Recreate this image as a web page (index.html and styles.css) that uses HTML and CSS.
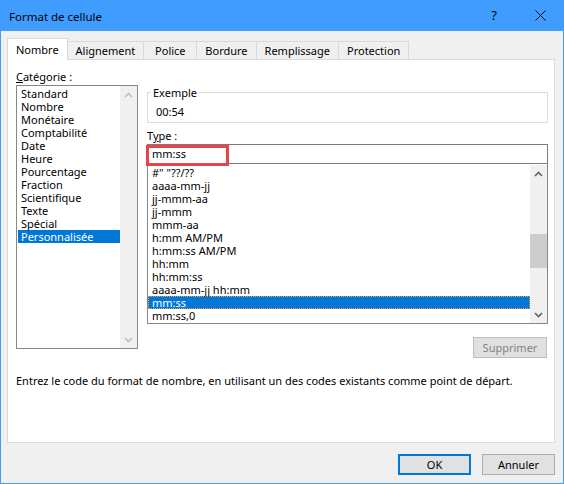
FILE: index.html
```html
<!DOCTYPE html>
<html lang="fr">
<head>
<meta charset="utf-8">
<title>Format de cellule</title>
<link rel="stylesheet" href="styles.css">
</head>
<body>
<div class="window">
  <div class="titlebar">
    <span class="title">Format de cellule</span>
    <span class="tb-btn help">?</span>
    <span class="tb-btn close">
      <svg width="11" height="11" viewBox="0 0 11 11"><path d="M0.5 0.5 L10.5 10.5 M10.5 0.5 L0.5 10.5" stroke="#000" stroke-width="1" fill="none"/></svg>
    </span>
  </div>
  <div class="content">
    <div class="tabs">
      <div class="tab active">Nombre</div>
      <div class="tab">Alignement</div>
      <div class="tab">Police</div>
      <div class="tab">Bordure</div>
      <div class="tab">Remplissage</div>
      <div class="tab">Protection</div>
    </div>
    <div class="panel">
      <div class="panel-top">
        <div class="left-col">
          <div class="label"><u>C</u>atégorie :</div>
          <div class="listbox cat-list">
            <div class="items">
              <div class="item">Standard</div>
              <div class="item">Nombre</div>
              <div class="item">Monétaire</div>
              <div class="item">Comptabilité</div>
              <div class="item">Date</div>
              <div class="item">Heure</div>
              <div class="item">Pourcentage</div>
              <div class="item">Fraction</div>
              <div class="item">Scientifique</div>
              <div class="item">Texte</div>
              <div class="item">Spécial</div>
              <div class="item selected">Personnalisée</div>
            </div>
            <div class="scrollbar disabled">
              <div class="sb-btn"><svg width="9" height="6" viewBox="0 0 9 6"><path d="M1 5 L4.5 1.5 L8 5" fill="none" stroke-width="1.6"/></svg></div>
              <div class="sb-track"></div>
              <div class="sb-btn"><svg width="9" height="6" viewBox="0 0 9 6"><path d="M1 1 L4.5 4.5 L8 1" fill="none" stroke-width="1.6"/></svg></div>
            </div>
          </div>
        </div>
        <div class="right-col">
          <fieldset class="group">
            <legend>Exemple</legend>
            <div class="sample">00:54</div>
          </fieldset>
          <div class="label type-label">T<u>y</u>pe :</div>
          <div class="type-wrap">
            <div class="textbox">mm:ss</div>
            <div class="highlight"></div>
          </div>
          <div class="listbox fmt-list">
            <div class="items">
              <div class="item first">#" "??/??</div>
              <div class="item">aaaa-mm-jj</div>
              <div class="item">jj-mmm-aa</div>
              <div class="item">jj-mmm</div>
              <div class="item">mmm-aa</div>
              <div class="item">h:mm AM/PM</div>
              <div class="item">h:mm:ss AM/PM</div>
              <div class="item">hh:mm</div>
              <div class="item">hh:mm:ss</div>
              <div class="item">aaaa-mm-jj hh:mm</div>
              <div class="item selected focused">mm:ss</div>
              <div class="item">mm:ss,0</div>
            </div>
            <div class="scrollbar">
              <div class="sb-btn"><svg width="9" height="6" viewBox="0 0 9 6"><path d="M1 5 L4.5 1.5 L8 5" fill="none" stroke-width="1.6"/></svg></div>
              <div class="sb-track"><div class="sb-thumb"></div></div>
              <div class="sb-btn"><svg width="9" height="6" viewBox="0 0 9 6"><path d="M1 1 L4.5 4.5 L8 1" fill="none" stroke-width="1.6"/></svg></div>
            </div>
          </div>
          <div class="btn disabled-btn delete">Supprimer</div>
        </div>
      </div>
      <p class="description">Entrez le code du format de nombre, en utilisant un des codes existants comme point de départ.</p>
    </div>
    <div class="actions">
      <div class="btn default">OK</div>
      <div class="btn">Annuler</div>
    </div>
  </div>
</div>
</body>
</html>
```
FILE: styles.css
```css
* { box-sizing: border-box; }
html, body { margin: 0; padding: 0; }
body {
  font-family: "Noto Sans", "Open Sans", sans-serif;
  font-size: 11px;
  line-height: 13px;
  color: #000;
  background: #f0f0f0;
}
.window {
  width: 564px;
  height: 484px;
  border: 1px solid #409cff;
  border-top: 0;
  background: #f0f0f0;
  display: flex;
  flex-direction: column;
}
.titlebar {
  height: 31px;
  background: #409cff;
  display: flex;
  align-items: center;
  padding-left: 8px;
  flex: none;
}
.title { flex: 1; font-size: 11.5px; padding-top: 1px; }
.tb-btn {
  width: 46px;
  height: 31px;
  display: flex;
  align-items: center;
  justify-content: center;
}
.help { font-size: 13px; }
.content { padding: 7px 8px 0 6px; }
.tabs {
  display: flex;
  align-items: flex-end;
  height: 21px;
  position: relative;
  z-index: 1;
}
.tab {
  height: 18px;
  padding: 0 8px;
  min-width: 54px;
  border: 1px solid #d9d9d9;
  border-bottom: 0;
  margin-left: -1px;
  background: #f0f0f0;
  display: flex;
  align-items: center;
  justify-content: center;
  white-space: nowrap;
}
.tab.active {
  margin-left: 0;
  height: 22px;
  margin-bottom: -1px;
  padding: 0 8px 1px;
  background: #fff;
  position: relative;
  z-index: 2;
}
.panel {
  height: 384px;
  background: #fff;
  border: 1px solid #d9d9d9;
  padding: 10px 6px 0 8px;
}
.panel-top { display: flex; gap: 9px; }
.left-col { width: 122px; }
.right-col { width: 401px; padding-top: 16px; display: flex; flex-direction: column; }
.label { height: 13px; white-space: nowrap; }
.listbox {
  border: 1px solid #828790;
  background: #fff;
  display: flex;
  overflow: hidden;
}
.cat-list { height: 264px; margin-top: 2px; }
.items { flex: 1; overflow: hidden; }
.cat-list .items { padding: 1px 0 0 1px; }
.item {
  height: 13px;
  line-height: 13px;
  padding-left: 3px;
  white-space: nowrap;
}
.item.selected { background: #0078d7; color: #fff; }
.item.focused { outline: 1px dotted #f0a13c; outline-offset: -1px; }
.scrollbar {
  width: 17px;
  flex: none;
  background: #f0f0f0;
  display: flex;
  flex-direction: column;
}
.sb-btn {
  height: 17px;
  flex: none;
  display: flex;
  align-items: center;
  justify-content: center;
}
.sb-btn svg { stroke: #606060; }
.scrollbar.disabled .sb-btn svg { stroke: #bfbfbf; }
.sb-track { flex: 1; }
.sb-thumb { margin: 52px 0 0 0; height: 34px; background: #cdcdcd; }
.group {
  margin: 0;
  border: 1px solid #dcdcdc;
  padding: 6px 8px 4px;
}
.group legend { padding: 0 2px; margin-left: -5px; line-height: 13px; }
.sample { height: 13px; }
.type-label { margin-top: 6px; }
.type-wrap { position: relative; margin-top: 2px; }
.textbox {
  height: 20px;
  border: 1px solid #7a7a7a;
  background: #fff;
  padding: 2px 4px;
  line-height: 14px;
}
.highlight {
  position: absolute;
  left: -1px;
  top: 1px;
  width: 83px;
  height: 21px;
  border: 3px solid #e8424a;
}
.fmt-list { height: 161px; margin-top: -1px; }
.fmt-list .items { padding-top: 2px; }
.fmt-list .item { padding-left: 4px; }
.fmt-list .scrollbar { margin-top: 1px; }
.btn {
  height: 21px;
  border: 1px solid #adadad;
  background: #e1e1e1;
  display: flex;
  align-items: center;
  justify-content: center;
}
.delete {
  width: 74px;
  align-self: flex-end;
  margin: 13px 1px 0 0;
}
.disabled-btn { background: #e0e0e0; border-color: #bfbfbf; color: #838383; }
.description { margin: 16px 0 0 0; white-space: nowrap; }
.actions {
  display: flex;
  justify-content: flex-end;
  gap: 11px;
  margin-top: 11px;
}
.actions .btn { width: 73px; }
.btn.default { border: 2px solid #0078d7; }
```
